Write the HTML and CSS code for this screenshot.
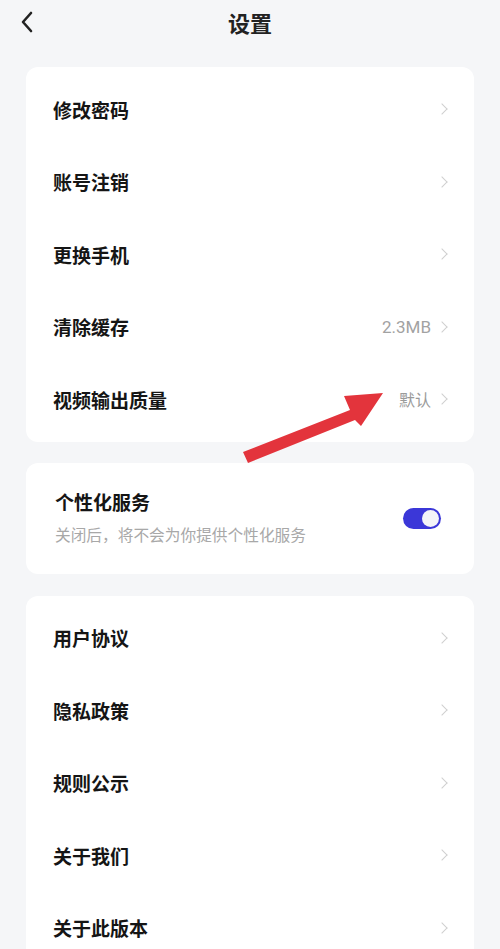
FILE: index.html
```html
<html>
<head>
<title>设置</title>
<meta name="viewport" content="width=device-width, initial-scale=1">
<link rel="stylesheet" href="styles.css">
</head>
<body>
<div class="page">
  <div class="topbar">
    <svg class="back" width="14" height="22" viewBox="0 0 14 22"><path d="M11 2 L3 11 L11 20" fill="none" stroke="#222" stroke-width="2.6" stroke-linecap="round" stroke-linejoin="round"/></svg>
    <div class="title">设置</div>
  </div>

  <div class="card">
    <div class="row"><span class="label">修改密码</span><span class="chev"></span></div>
    <div class="row"><span class="label">账号注销</span><span class="chev"></span></div>
    <div class="row"><span class="label">更换手机</span><span class="chev"></span></div>
    <div class="row"><span class="label">清除缓存</span><span class="value num">2.3MB</span><span class="chev"></span></div>
    <div class="row"><span class="label">视频输出质量</span><span class="value">默认</span><span class="chev"></span></div>
  </div>

  <div class="card switch-card">
    <div class="switch-text">
      <div class="label">个性化服务</div>
      <div class="sub">关闭后，将不会为你提供个性化服务</div>
    </div>
    <div class="toggle on"><div class="knob"></div></div>
  </div>

  <div class="card">
    <div class="row"><span class="label">用户协议</span><span class="chev"></span></div>
    <div class="row"><span class="label">隐私政策</span><span class="chev"></span></div>
    <div class="row"><span class="label">规则公示</span><span class="chev"></span></div>
    <div class="row"><span class="label">关于我们</span><span class="chev"></span></div>
    <div class="row"><span class="label">关于此版本</span><span class="chev"></span></div>
  </div>

  <!-- annotation arrow drawn over the page -->
  <svg class="arrow" width="160" height="80" viewBox="0 0 160 80">
    <path d="M3 66 L110 24 L104 10 L143 7 L121 40 L115 34 L8 77 Z" fill="#e3343c"/>
  </svg>
</div>
</body>
</html>
```

FILE: styles.css
```css
body {
  margin: 0;
  background: #f5f6f8;
  font-family: "Noto Sans CJK SC", "Noto Sans", sans-serif;
  color: #111;
}

.page {
  position: relative;
  width: 500px;
  height: 949px;
  overflow: hidden;
}

.topbar {
  position: relative;
  height: 44px;
  margin-bottom: 23px;
  display: flex;
  align-items: center;
  justify-content: center;
}

.back {
  position: absolute;
  left: 20px;
  top: 11px;
}

.title {
  font-size: 22px;
  font-weight: bold;
  color: #222;
}

.card {
  background: #fff;
  margin: 0 26px 21px;
  border-radius: 12px;
  padding: 6px 0;
}

.row {
  height: 72.5px;
  display: flex;
  align-items: center;
  padding: 0 27px;
}

.label {
  font-size: 19px;
  font-weight: bold;
  color: #151515;
  flex: 1;
}

.value {
  font-size: 16px;
  color: #9a9a9a;
  margin-right: 7px;
}

.value.num {
  font-family: "Roboto", "Noto Sans", sans-serif;
  font-size: 17px;
  color: #a2a2a2;
}

.chev {
  width: 7px;
  height: 7px;
  border-top: 1.6px solid #cfcfcf;
  border-right: 1.6px solid #cfcfcf;
  transform: rotate(45deg);
  margin-right: 1px;
}

.switch-card {
  display: flex;
  align-items: center;
  padding: 25px 33px 28px 29px;
  margin-bottom: 22px;
}

.switch-text {
  flex: 1;
}

.switch-text .label {
  line-height: 28px;
}

.sub {
  font-size: 15.7px;
  color: #a8a8a8;
  margin-top: 8px;
  line-height: 22px;
}

.toggle {
  width: 38px;
  height: 21px;
  border-radius: 11px;
  background: #3b37d8;
  position: relative;
  margin-top: 4px;
}

.toggle .knob {
  position: absolute;
  top: 2px;
  right: 2px;
  width: 17px;
  height: 17px;
  border-radius: 50%;
  background: #f4f4f8;
}

.arrow {
  position: absolute;
  left: 240px;
  top: 386px;
}
```
